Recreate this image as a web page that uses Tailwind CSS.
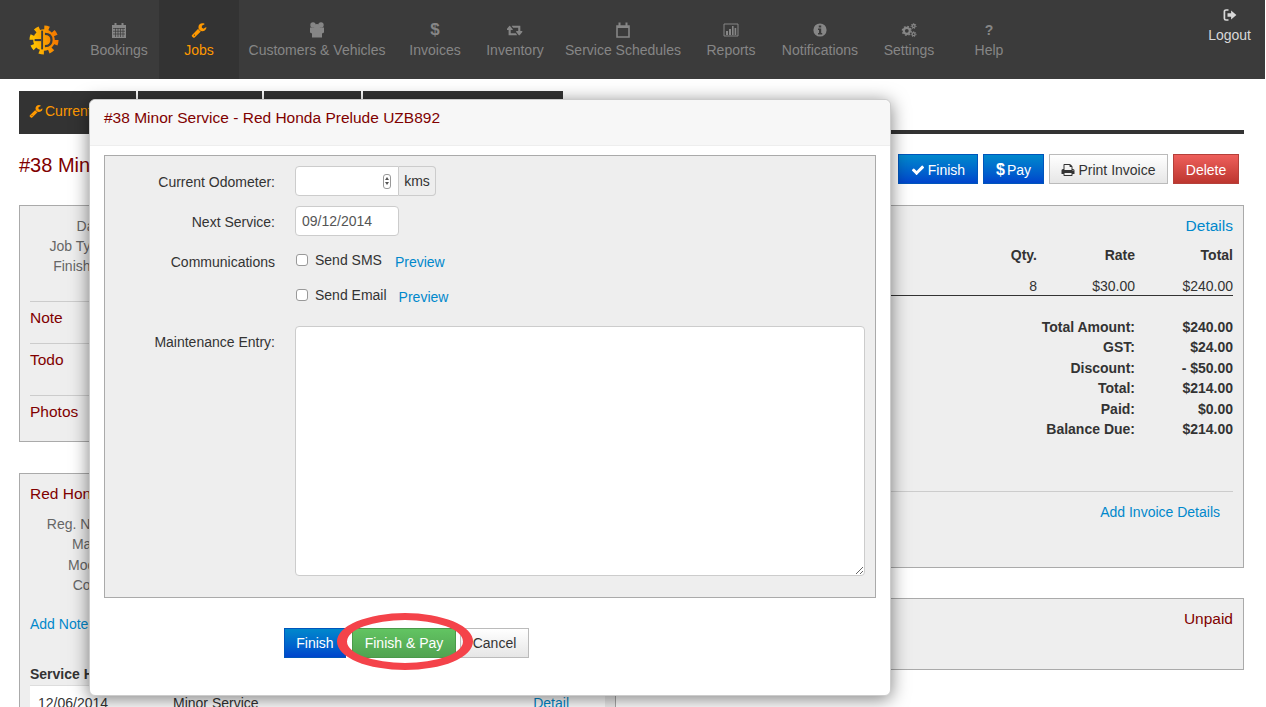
<!DOCTYPE html>
<html lang="en">
<head>
  <meta charset="UTF-8">
  <title>Job #38</title>
  <script src="https://cdn.jsdelivr.net/npm/@tailwindcss/browser@4"></script>
</head>
<body class="relative h-[707px] overflow-hidden bg-white font-['Liberation_Sans',Arial,sans-serif] text-sm text-[#333]">

  <!-- Top nav -->
  <nav class="flex h-[79px] w-[1265px] bg-[#3b3b3b] text-[#868686]">
    <div class="flex w-[79px] items-center pl-[29px]">
      <svg class="w-[30px] h-[30px] shrink-0" viewBox="0 0 32 32">
        <defs>
          <linearGradient id="logoGrad" x1="0" y1="0.6" x2="1" y2="0.4">
            <stop offset="0" stop-color="#ffc400"/>
            <stop offset="1" stop-color="#f47a00"/>
          </linearGradient>
        </defs>
        <circle cx="16" cy="16" r="13" fill="none" stroke="url(#logoGrad)" stroke-width="5" stroke-dasharray="5 5.2"/>
        <circle cx="16" cy="16" r="11.5" fill="url(#logoGrad)"/>
        <rect x="13" y="6" width="2" height="20" fill="#3b3b3b"/>
        <path d="M17 9.5c5 0 7 3 7 6.5s-2 6.5-7 6.5" fill="none" stroke="#3b3b3b" stroke-width="2.4"/>
        <rect x="6" y="15" width="7" height="2.2" fill="#3b3b3b"/>
      </svg>
    </div>

    <a class="w-[80px] pt-[22px] text-center">
      <svg class="mx-auto w-[16px] h-[16px]" viewBox="0 0 16 16" fill="#868686">
        <path d="M1 3h2.5V1h2v2h5V1h2v2H15v13H1z"/>
        <path d="M2 6.5h12M2 9.25h12M2 12h12M4.5 6v9M7 6v9M9.5 6v9M12 6v9" stroke="#3b3b3b" stroke-width=".7"/>
      </svg>
      <span class="mt-[2px] block leading-5">Bookings</span>
    </a>
    <a class="w-[80px] pt-[22px] text-center bg-[#333] text-[#ff9900]">
      <svg class="mx-auto w-[16px] h-[16px]" viewBox="0 0 1792 1792" fill="#ff9900">
        <path d="M448 1472q0-26-19-45t-45-19-45 19-19 45 19 45 45 19 45-19 19-45zm644-420l-682 682q-37 37-90 37-52 0-91-37l-106-108q-38-36-38-90 0-53 38-91l681-681q39 98 114.5 173.5t173.5 114.5zm634-435q0 39-23 106-47 134-164.5 217.5t-258.5 83.5q-185 0-316.5-131.5t-131.5-316.5 131.5-316.5 316.5-131.5q58 0 121.5 16.5t107.5 46.5q16 11 16 28t-16 28l-293 169v224l193 107q5-3 79-48.5t135.5-81 70.5-35.5q15 0 23.5 10t8.5 25z"/>
      </svg>
      <span class="mt-[2px] block leading-5">Jobs</span>
    </a>
    <a class="w-[156px] pt-[22px] text-center">
      <svg class="mx-auto w-[16px] h-[16px]" viewBox="0 0 16 16" fill="#868686">
        <circle cx="4" cy="3" r="2.7"/>
        <circle cx="12" cy="3" r="2.7"/>
        <circle cx="8" cy="5" r="3"/>
        <path d="M1 5.5h14v5l-2 1v4H3v-4l-2-1z"/>
      </svg>
      <span class="mt-[2px] block leading-5">Customers &amp; Vehicles</span>
    </a>
    <a class="w-[80px] pt-[22px] text-center">
      <span class="block h-[16px] text-[17px] leading-4 font-bold">$</span>
      <span class="mt-[2px] block leading-5">Invoices</span>
    </a>
    <a class="w-[80px] pt-[22px] text-center">
      <svg class="mx-auto w-[16px] h-[16px]" viewBox="0 0 1920 1792" fill="#868686">
        <path d="M1216 1504q0 13-9.5 22.5t-22.5 9.5h-960q-8 0-13.5-2t-9-7-5.5-8-3-11.5-1-11.5v-600h-192q-26 0-45-19t-19-45q0-24 15-41l320-384q19-22 49-22t49 22l320 384q15 17 15 41 0 26-19 45t-45 19h-192v384h576q16 0 25 11l160 192q7 10 7 21zm640-416q0 24-15 41l-320 384q-20 23-49 23t-49-23l-320-384q-15-17-15-41 0-26 19-45t45-19h192v-384h-576q-16 0-25-12l-160-192q-7-9-7-20 0-13 9.5-22.5t22.5-9.5h960q8 0 13.5 2t9 7 5.5 8 3 11.5 1 11.5v600h192q26 0 45 19t19 45z"/>
      </svg>
      <span class="mt-[2px] block leading-5">Inventory</span>
    </a>
    <a class="w-[136px] pt-[22px] text-center">
      <svg class="mx-auto w-[16px] h-[16px]" viewBox="0 0 16 16" fill="none" stroke="#868686" stroke-width="1.6">
        <path d="M2 4h12v11H2z"/>
        <path d="M4.5 0.5v3.5M11.5 0.5v3.5" stroke-width="2"/>
        <path d="M2 5h12" stroke-width="2"/>
      </svg>
      <span class="mt-[2px] block leading-5">Service Schedules</span>
    </a>
    <a class="w-[80px] pt-[22px] text-center">
      <svg class="mx-auto w-[16px] h-[16px]" viewBox="0 0 16 16" fill="#868686">
        <path d="M1 2h14v12H1z" fill="none" stroke="#868686" stroke-width="1"/>
        <path d="M3 9h2v4H3zM6 7h2v6H6zM9 4h1.6v9H9zM11.6 6h1.6v7h-1.6z"/>
      </svg>
      <span class="mt-[2px] block leading-5">Reports</span>
    </a>
    <a class="w-[98px] pt-[22px] text-center">
      <svg class="mx-auto w-[16px] h-[16px]" viewBox="0 0 16 16">
        <circle cx="8" cy="8" r="6.6" fill="#868686"/>
        <path d="M6.8 3.4h2.4v2H6.8zM6 6.6h3.2V11h1v1.4H6V11h1V8H6z" fill="#3b3b3b"/>
      </svg>
      <span class="mt-[2px] block leading-5">Notifications</span>
    </a>
    <a class="w-[80px] pt-[22px] text-center">
      <svg class="mx-auto w-[16px] h-[16px]" viewBox="0 0 16 16" fill="none" stroke="#868686">
        <circle cx="5.8" cy="8.8" r="3" stroke-width="2.2"/>
        <circle cx="5.8" cy="8.8" r="4.4" stroke-width="1.4" stroke-dasharray="1.7 1.75"/>
        <circle cx="12.6" cy="4" r="1.5" stroke-width="1.3"/>
        <circle cx="12.6" cy="4" r="2.5" stroke-width="1" stroke-dasharray="1.1 1.1"/>
        <circle cx="12.6" cy="12.2" r="1.5" stroke-width="1.3"/>
        <circle cx="12.6" cy="12.2" r="2.5" stroke-width="1" stroke-dasharray="1.1 1.1"/>
      </svg>
      <span class="mt-[2px] block leading-5">Settings</span>
    </a>
    <a class="w-[80px] pt-[22px] text-center">
      <span class="block h-[16px] text-sm leading-4 font-bold">?</span>
      <span class="mt-[2px] block leading-5">Help</span>
    </a>

    <a class="ml-auto pr-[14px] pt-[8px] text-center text-[#d8d8d8]">
      <svg class="mx-auto w-[14px] h-[14px]" viewBox="0 0 14 14">
        <path d="M5.5 2H3a1.6 1.6 0 0 0-1.6 1.6v6.8A1.6 1.6 0 0 0 3 12h2.5" fill="none" stroke="#d8d8d8" stroke-width="1.7"/>
        <path d="M4.5 5.2h3.6V2.6L13.4 7l-5.3 4.4V8.8H4.5z" fill="#d8d8d8"/>
      </svg>
      <span class="mt-[3px] block leading-5">Logout</span>
    </a>
  </nav>

  <main class="h-[628px] w-[1244px] overflow-hidden pl-[19px] pt-[12px]">
    <!-- Tabs -->
    <div class="flex h-[43px] gap-[2px] border-b-4 border-[#333]">
      <a class="flex w-[117px] items-center gap-[2px] bg-[#333] pl-[10px] text-[#ff9900]">
        <svg class="w-[14px] h-[14px]" viewBox="0 0 1792 1792" fill="#ff9900">
          <path d="M448 1472q0-26-19-45t-45-19-45 19-19 45 19 45 45 19 45-19 19-45zm644-420l-682 682q-37 37-90 37-52 0-91-37l-106-108q-38-36-38-90 0-53 38-91l681-681q39 98 114.5 173.5t173.5 114.5zm634-435q0 39-23 106-47 134-164.5 217.5t-258.5 83.5q-185 0-316.5-131.5t-131.5-316.5 131.5-316.5 316.5-131.5q58 0 121.5 16.5t107.5 46.5q16 11 16 28t-16 28l-293 169v224l193 107q5-3 79-48.5t135.5-81 70.5-35.5q15 0 23.5 10t8.5 25z"/>
        </svg>
        Current Job
      </a>
      <div class="w-[124px] bg-[#333]"></div>
      <div class="w-[97px] bg-[#333]"></div>
      <div class="w-[200px] bg-[#333]"></div>
    </div>

    <!-- Title and actions -->
    <div class="mt-[20px] flex h-[30px] justify-between pr-[5px]">
      <h1 class="text-xl leading-[22px] text-[#800000]">#38 Minor Service</h1>
      <div class="flex gap-[5px] text-[14px]">
        <a class="flex w-[80px] items-center justify-center gap-[3px] border border-[#0055bb] bg-gradient-to-b from-[#0088cc] to-[#0044cc] pt-[1px] text-white">
          <svg class="w-[14px] h-[14px]" viewBox="0 0 1792 1792" fill="#fff"><path d="M1671 566q0 40-28 68l-724 724-136 136q-28 28-68 28t-68-28l-136-136-362-362q-28-28-28-68t28-68l136-136q28-28 68-28t68 28l294 295 656-657q28-28 68-28t68 28l136 136q28 28 28 68z"/></svg>
          Finish
        </a>
        <a class="flex w-[61px] items-center justify-center gap-[2px] border border-[#0055bb] bg-gradient-to-b from-[#0088cc] to-[#0044cc] pt-[1px] text-white"><b class="text-base">$</b>Pay</a>
        <a class="flex w-[119px] items-center justify-center gap-[3px] border border-[#bbb] bg-gradient-to-b from-white to-[#e6e6e6] pt-[1px]">
          <svg class="w-[14px] h-[14px]" viewBox="0 0 1792 1792" fill="#333"><path d="M448 1536h896v-256h-896v256zm0-640h896v-384h-160q-40 0-68-28t-28-68v-160h-640v640zm1152 64q0-26-19-45t-45-19-45 19-19 45 19 45 45 19 45-19 19-45zm128 0v416q0 13-9.5 22.5t-22.5 9.5h-224v160q0 40-28 68t-68 28h-960q-40 0-68-28t-28-68v-160h-224q-13 0-22.5-9.5t-9.5-22.5v-416q0-79 56.5-135.5t135.5-56.5h64v-544q0-40 28-68t68-28h672q40 0 88 20t76 48l152 152q28 28 48 76t20 88v256h64q79 0 135.5 56.5t56.5 135.5z"/></svg>
          Print Invoice
        </a>
        <a class="flex w-[66px] items-center justify-center border border-[#b5403a] bg-gradient-to-b from-[#ee5f5b] to-[#bd362f] pt-[1px] text-white">Delete</a>
      </div>
    </div>

    <div class="mt-[21px] flex justify-between">
      <!-- Left column -->
      <div class="w-[597px]">
        <section class="h-[237px] border border-[#aaa] bg-[#eee] px-[10px] pt-[10px]">
          <div class="text-[#666] leading-5">
            <p class="w-[80px] text-right">Date:</p>
            <p class="w-[80px] text-right">Job Type:</p>
            <p class="w-[80px] text-right">Finished:</p>
          </div>
          <div class="mt-[25px] h-[42px] border-t border-[#ccc] pt-[6px] text-[15.5px] leading-5 text-[#800000]">Note</div>
          <div class="h-[52px] border-t border-[#ccc] pt-[6px] text-[15.5px] leading-5 text-[#800000]">Todo</div>
          <div class="border-t border-[#ccc] pt-[6px] text-[15.5px] leading-5 text-[#800000]">Photos</div>
        </section>
        <section class="mt-[31px] h-[300px] border border-[#aaa] bg-[#eee] px-[10px] pt-[10px]">
          <h2 class="text-[15.5px] leading-5 text-[#800000]">Red Honda Prelude</h2>
          <div class="mt-[10px] leading-[20.3px] text-[#666]">
            <p class="w-[76px] text-right">Reg. No.:</p>
            <p class="w-[80px] text-right">Make:</p>
            <p class="w-[80px] text-right">Model:</p>
            <p class="w-[80px] text-right">Color:</p>
          </div>
          <a class="mt-[19px] block leading-5 text-[#0088cc]">Add Note</a>
          <h3 class="mt-[30px] font-bold leading-5">Service History</h3>
          <div class="mt-[1px] flex border-t border-[#ddd] bg-white py-[7px] pl-[8px] pr-[36px] leading-5">
            <span class="w-[135px]">12/06/2014</span>
            <span>Minor Service</span>
            <a class="ml-auto text-[#0088cc]">Detail</a>
          </div>
        </section>
      </div>

      <!-- Right column -->
      <div class="w-[608px]">
        <section class="h-[363px] border border-[#aaa] bg-[#eee] px-[10px] pt-[10px]">
          <a class="block text-right text-[15.5px] leading-5 text-[#0088cc]">Details</a>
          <div class="mt-[9px] flex justify-end font-bold leading-5">
            <span class="w-[60px] text-right">Qty.</span>
            <span class="w-[98px] text-right">Rate</span>
            <span class="w-[98px] text-right">Total</span>
          </div>
          <div class="mt-[12px] flex justify-end border-b border-[#333] leading-[18px]">
            <span class="w-[60px] text-right">8</span>
            <span class="w-[98px] text-right">$30.00</span>
            <span class="w-[98px] text-right">$240.00</span>
          </div>
          <dl class="mt-[21px] grid grid-cols-[1fr_98px] text-right font-bold leading-[20.4px]">
            <dt>Total Amount:</dt><dd>$240.00</dd>
            <dt>GST:</dt><dd>$24.00</dd>
            <dt>Discount:</dt><dd>- $50.00</dd>
            <dt>Total:</dt><dd>$214.00</dd>
            <dt>Paid:</dt><dd>$0.00</dd>
            <dt>Balance Due:</dt><dd>$214.00</dd>
          </dl>
          <div class="mt-[52px] border-t border-[#ccc] pt-[10px] pr-[13px] text-right leading-5 text-[#0088cc]">Add Invoice Details</div>
        </section>
        <section class="mt-[30px] h-[72px] border border-[#aaa] bg-[#eee] px-[10px] pt-[10px] text-right text-[15.5px] leading-5 text-[#800000]">Unpaid</section>
      </div>
    </div>
  </main>

  <!-- Finish job dialog -->
  <div class="absolute left-[89px] top-[99px] h-[597px] w-[802px] rounded-md border border-[#ccc] bg-white shadow-[0_3px_18px_rgba(0,0,0,0.5)]">
    <div class="flex h-[46px] items-center rounded-t-md border-b border-[#eee] bg-[#f7f7f7] px-[14px] pb-[8px] text-[15.5px] text-[#800000]">#38 Minor Service - Red Honda Prelude UZB892</div>

    <div class="mx-[14px] mt-[9px] h-[443px] border border-[#aaa] bg-[#eee]">
      <div class="flex pt-[10px]">
        <label class="w-[170px] pt-[6px] text-right leading-5">Current Odometer:</label>
        <div class="ml-[20px] flex h-[30px]">
          <div class="flex w-[104px] items-center justify-end rounded-l-[4px] border border-[#ccc] bg-white pr-[7px]">
            <div class="flex h-[15px] w-[8px] flex-col items-center justify-center gap-[2px] rounded-[3px] border border-[#999]">
              <span class="h-0 w-0 border-x-[2px] border-b-[3px] border-x-transparent border-b-[#555]"></span>
              <span class="h-0 w-0 border-x-[2px] border-t-[3px] border-x-transparent border-t-[#555]"></span>
            </div>
          </div>
          <span class="flex w-[37px] items-center justify-center rounded-r-[4px] border border-l-0 border-[#ccc] bg-[#eee]">kms</span>
        </div>
      </div>
      <div class="mt-[10px] flex">
        <label class="w-[170px] pt-[6px] text-right leading-5">Next Service:</label>
        <input class="ml-[20px] h-[30px] w-[104px] rounded-[4px] border border-[#ccc] bg-white px-[6px] text-[#555]" value="09/12/2014">
      </div>
      <div class="mt-[16px] flex">
        <label class="w-[170px] text-right leading-5">Communications</label>
        <div class="ml-[20px]">
          <div class="flex items-center">
            <input type="checkbox" class="ml-[1px] h-[12px] w-[12px] appearance-none rounded-[3px] border border-[#999] bg-white mt-[-4px]">
            <span class="ml-[7px] mt-[-4px] leading-5">Send SMS</span>
            <a class="ml-[13px] leading-5 text-[#0088cc]">Preview</a>
          </div>
          <div class="mt-[15px] flex items-center">
            <input type="checkbox" class="ml-[1px] h-[12px] w-[12px] appearance-none rounded-[3px] border border-[#999] bg-white mt-[-4px]">
            <span class="ml-[7px] mt-[-4px] leading-5">Send Email</span>
            <a class="ml-[12px] leading-5 text-[#0088cc]">Preview</a>
          </div>
        </div>
      </div>
      <div class="mt-[19px] flex">
        <label class="w-[170px] pt-[6px] text-right leading-5">Maintenance Entry:</label>
        <textarea class="ml-[20px] h-[250px] w-[570px] rounded-[4px] border border-[#ccc] bg-white"></textarea>
      </div>
    </div>

    <div class="mt-[30px] ml-[194px] flex h-[30px] text-[14px]">
      <a class="flex w-[62px] items-center justify-center border border-[#0055bb] bg-gradient-to-b from-[#0088cc] to-[#0044cc] text-white">Finish</a>
      <a class="ml-[6px] flex w-[104px] items-center justify-center border border-[#4a9a4a] bg-gradient-to-b from-[#62c462] to-[#51a351] text-white">Finish &amp; Pay</a>
      <a class="ml-[4px] flex w-[69px] items-center justify-center border border-[#bbb] bg-gradient-to-b from-white to-[#e6e6e6]">Cancel</a>
    </div>
  </div>

  <!-- Red annotation round the Finish & Pay button -->
  <svg class="absolute left-[337px] top-[613px] h-[57px] w-[136px]" viewBox="0 0 136 57">
    <path fill="#f4434a" fill-rule="evenodd" d="M0 28.5a68 28.5 0 1 0 136 0a68 28.5 0 1 0-136 0zM10 28.5a58 21.5 0 1 1 116 0a58 21.5 0 1 1-116 0z"/>
  </svg>
</body>
</html>
